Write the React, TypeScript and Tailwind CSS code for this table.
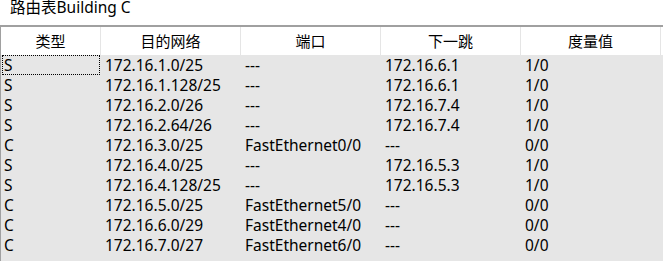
const columns = ['类型', '目的网络', '端口', '下一跳', '度量值'];

const routes = [
  ['S', '172.16.1.0/25', '---', '172.16.6.1', '1/0'],
  ['S', '172.16.1.128/25', '---', '172.16.6.1', '1/0'],
  ['S', '172.16.2.0/26', '---', '172.16.7.4', '1/0'],
  ['S', '172.16.2.64/26', '---', '172.16.7.4', '1/0'],
  ['C', '172.16.3.0/25', 'FastEthernet0/0', '---', '0/0'],
  ['S', '172.16.4.0/25', '---', '172.16.5.3', '1/0'],
  ['S', '172.16.4.128/25', '---', '172.16.5.3', '1/0'],
  ['C', '172.16.5.0/25', 'FastEthernet5/0', '---', '0/0'],
  ['C', '172.16.6.0/29', 'FastEthernet4/0', '---', '0/0'],
  ['C', '172.16.7.0/27', 'FastEthernet6/0', '---', '0/0'],
];

export default function App() {
  return (
    <div
      className="w-[663px] h-[261px] overflow-hidden bg-white text-black"
      style={{ fontFamily: '"Noto Sans", "Noto Sans CJK SC", sans-serif' }}
    >
      <div className="h-[25px] pl-[10px] text-[15.5px] leading-[15px]">路由表Building C</div>
      <div className="border-t-2 border-t-[#a0a0a0] border-l border-l-[#a0a0a0] h-[236px] bg-[#e6e6e6]">
        <div className="flex h-[28px] bg-white text-[15px]">
          {columns.map((c, i) => (
            <div
              key={c}
              className={`flex items-center justify-center border-r border-[#e5e5e5] ${i === 0 ? 'w-[100px]' : 'w-[140px]'}`}
            >
              {c}
            </div>
          ))}
        </div>
        {routes.map((r, ri) => (
          <div key={ri} className="flex h-[20px] text-[15.5px] leading-[20px]">
            {r.map((cell, ci) => (
              <div
                key={ci}
                className={`${ci === 0 ? 'w-[100px] pl-[3px]' : 'w-[140px] pl-[4px]'}`}
              >
                {ri === 0 && ci === 0 ? (
                  <div className="ml-[-2px] mr-[1px] h-[20px] border border-dotted border-black pl-[1px] leading-[18px]">
                    {cell}
                  </div>
                ) : (
                  cell
                )}
              </div>
            ))}
          </div>
        ))}
      </div>
    </div>
  );
}
